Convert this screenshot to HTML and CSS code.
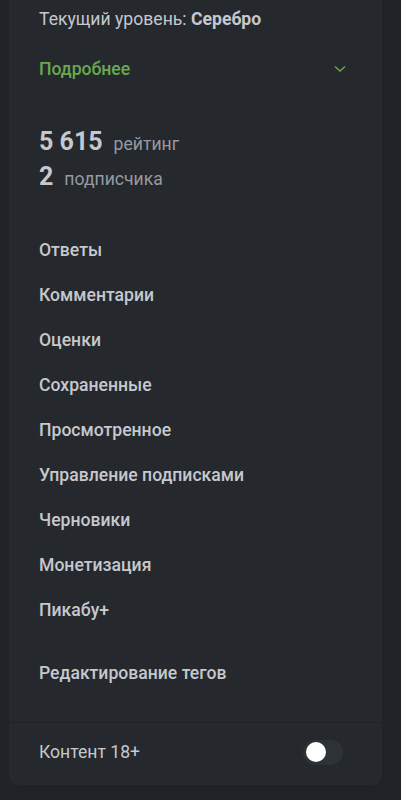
FILE: index.html
```html
<!DOCTYPE html>
<html lang="ru">

<head>
    <meta charset="UTF-8">
    <meta name="viewport" content="width=device-width, initial-scale=1.0">
    <title>Профиль</title>
    <link rel="stylesheet" href="styles.css">
</head>

<body>
    <div class="profile-card">
        <div class="level">
            Текущий уровень: <b>Серебро</b>
        </div>
        <div class="details">
            <span>Подробнее</span>
            <svg class="chevron" width="12" height="8" viewBox="0 0 12 8">
                <path d="M1 1.5 L6 6 L11 1.5" fill="none" stroke="currentColor" stroke-width="1.5" />
            </svg>
        </div>
        <div class="stats">
            <div class="stat"><span class="value">5 615</span><span class="label">рейтинг</span></div>
            <div class="stat"><span class="value">2</span><span class="label">подписчика</span></div>
        </div>
        <nav class="menu">
            <a class="item">Ответы</a>
            <a class="item">Комментарии</a>
            <a class="item">Оценки</a>
            <a class="item">Сохраненные</a>
            <a class="item">Просмотренное</a>
            <a class="item">Управление подписками</a>
            <a class="item">Черновики</a>
            <a class="item">Монетизация</a>
            <a class="item">Пикабу+</a>
        </nav>
        <nav class="menu extra">
            <a class="item">Редактирование тегов</a>
        </nav>
        <div class="footer">
            <span>Контент 18+</span>
            <div class="toggle"><div class="knob"></div></div>
        </div>
    </div>
</body>

</html>
```

FILE: styles.css
```css
html,
body {
    margin: 0;
    font-family: Roboto, "Liberation Sans", sans-serif;
    background-color: var(--background-color);
    color: var(--text-color);
}

:root {
    --text-color: #c5c8cd;
    --secondary-text-color: #959aa1;
    --background-color: #1f2226;
    --card-color: #25292e;
    --track-color: #2d3237;
    --accent-color: #6aa84f;
    --border-color: #1f2327;
    --font-size: 17.6px;
}

.profile-card {
    margin: 0 19px 15px 9px;
    padding: 0 39px 0 30px;
    background-color: var(--card-color);
    border-radius: 0 0 9px 9px;
}

.level {
    height: 38px;
    line-height: 38px;
    font-size: var(--font-size);
}

.level b {
    font-weight: 700;
}

.details {
    margin-top: 11px;
    height: 40px;
    display: flex;
    align-items: center;
    justify-content: space-between;
    color: var(--accent-color);
    font-size: var(--font-size);
    font-weight: 500;
}

.details .chevron {
    margin-right: -3px;
}

.stats {
    margin-top: 37px;
    display: grid;
    gap: 3px;
}

.stats .stat {
    height: 32px;
    display: flex;
    align-items: baseline;
    line-height: 32px;
}

.stats .value {
    font-size: 25px;
    font-weight: 700;
    margin-right: 11px;
}

.stats .label {
    font-size: var(--font-size);
    color: var(--secondary-text-color);
}

.menu {
    margin-top: 35px;
    display: grid;
}

.menu .item {
    height: 45px;
    line-height: 45px;
    font-size: var(--font-size);
    font-weight: 500;
    cursor: pointer;
}

.menu.extra {
    margin-top: 18px;
}

.footer {
    margin: 26px -39px 0 -30px;
    padding: 0 39px 4px 30px;
    height: 58px;
    border-top: 1px solid var(--border-color);
    display: flex;
    align-items: center;
    justify-content: space-between;
    font-size: var(--font-size);
}

.footer .toggle {
    width: 40px;
    height: 25px;
    border-radius: 13px;
    background-color: var(--track-color);
    display: flex;
    align-items: center;
    padding: 0 3px;
    box-sizing: border-box;
}

.footer .toggle .knob {
    width: 20px;
    height: 20px;
    border-radius: 50%;
    background-color: #fff;
}
```
